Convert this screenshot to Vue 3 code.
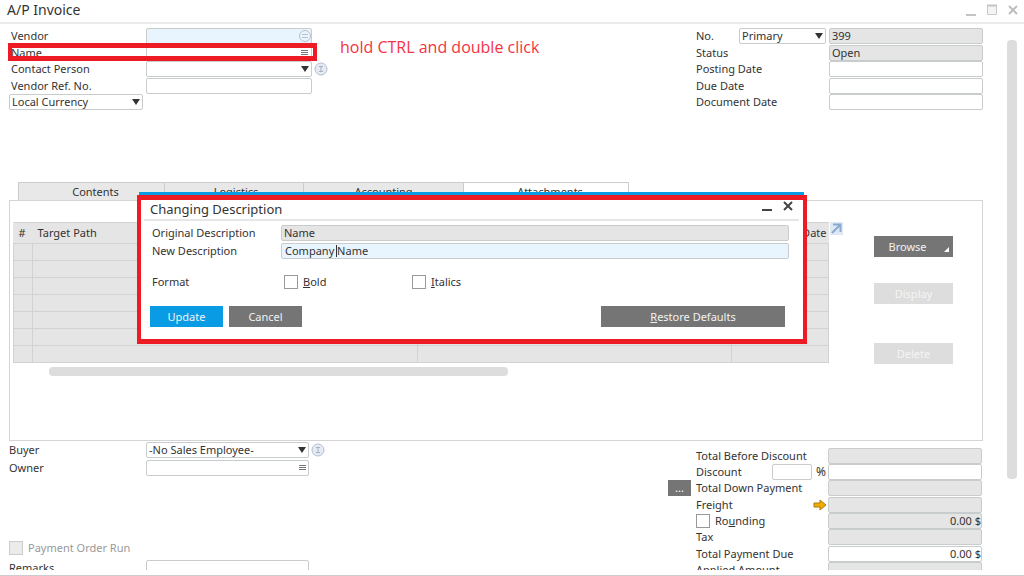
<template>
  <div class="window">
    <header class="titlebar">
      <h1>A/P Invoice</h1>
      <div class="win-buttons">
        <button aria-label="Minimize"><svg width="12" height="14"><path d="M1 12h10" stroke="#c4c4c4" stroke-width="2" /></svg></button>
        <button aria-label="Maximize"><svg width="12" height="14"><path d="M1.500 2.500h9v9h-9z" fill="#f4f4f4" stroke="#c8c8c8" /><path d="M1 2.500h10" stroke="#c4c4c4" stroke-width="2" /></svg></button>
        <button aria-label="Close"><svg width="12" height="14"><path d="M2 3l8 8M10 3l-8 8" stroke="#bdbdbd" stroke-width="2" /></svg></button>
      </div>
    </header>

    <div class="body">
      <main class="content">
        <section class="head">
          <div class="form left">
            <label for="vendor">Vendor</label>
            <div class="field">
              <input id="vendor" v-model="form.vendor" class="active" />
              <svg class="end" width="12" height="12"><circle cx="6" cy="6" r="5.500" fill="none" stroke="#b9bfc4" /><path d="M3 4.500h6M3 7.500h6" stroke="#b9bfc4" /></svg>
            </div>
            <label for="name">Name</label>
            <div class="field">
              <input id="name" v-model="form.name" />
              <svg class="end" width="12" height="12"><path d="M2 3.500h7M2 5.500h7M2 7.500h7" stroke="#777" /></svg>
            </div>
            <label for="contact">Contact Person</label>
            <div class="field">
              <select id="contact" v-model="form.contact"><option value=""></option></select>
              <svg class="end" width="12" height="12"><path d="M2 3h8L6 9z" fill="#333" /></svg>
              <svg class="info" width="14" height="14"><circle cx="7" cy="7" r="6" fill="#e6ebf3" stroke="#b3bfd0" /><path d="M5 4.500h4M5 9.500h4M7 5v4" stroke="#a6b0c2" /></svg>
            </div>
            <label for="ref">Vendor Ref. No.</label>
            <div class="field"><input id="ref" v-model="form.ref" /></div>
            <div class="field currency">
              <select v-model="form.currency" aria-label="Currency"><option>Local Currency</option></select>
              <svg class="end" width="12" height="12"><path d="M2 3h8L6 9z" fill="#333" /></svg>
            </div>
            <div class="mark"></div>
          </div>

          <p class="hint">hold CTRL and double click</p>

          <div class="form right">
            <div class="series">
              <label for="number">No.</label>
              <div class="field">
                <select v-model="form.series" aria-label="Series"><option>Primary</option></select>
                <svg class="end" width="12" height="12"><path d="M2 3h8L6 9z" fill="#333" /></svg>
              </div>
            </div>
            <div class="field"><input id="number" value="399" readonly /></div>
            <label for="status">Status</label>
            <div class="field"><input id="status" value="Open" readonly /></div>
            <template v-for="d in dates" :key="d.id">
              <label :for="d.id">{{ d.label }}</label>
              <div class="field"><input :id="d.id" v-model="form[d.id]" /></div>
            </template>
          </div>
        </section>

        <section class="details">
          <nav class="tabs">
            <button v-for="t in tabs" :key="t" :class="[t.toLowerCase(), { on: t === tab }]" @click="tab = t">{{ t }}</button>
          </nav>
          <div class="panel">
            <div class="table-area">
              <table>
                <colgroup><col class="c-num" /><col class="c-path" /><col class="c-file" /><col class="c-date" /></colgroup>
                <thead>
                  <tr><th>#</th><th>Target Path</th><th></th><th class="date">Date</th></tr>
                </thead>
                <tbody>
                  <tr v-for="r in 7" :key="r"><td v-for="c in 4" :key="c"></td></tr>
                </tbody>
              </table>
              <div class="hscroll"></div>
            </div>
            <button class="expand" aria-label="Expand table">
              <svg width="13" height="13"><path d="M0 0h13v13H0z" fill="#dfe9f5" /><path d="M3 2.500h7.500V10M10 3l-8 8" fill="none" stroke="#8aa9cf" stroke-width="2" /></svg>
            </button>
            <div class="actions">
              <button class="btn">Browse<svg class="corner" width="5" height="5"><path d="M5 0v5H0z" fill="#fff" /></svg></button>
              <button class="btn" disabled>Display</button>
              <button class="btn last" disabled>Delete</button>
            </div>
          </div>

          <div class="dialog" role="dialog" aria-labelledby="dlg-title">
            <div class="dlg-bar">
              <h2 id="dlg-title">Changing Description</h2>
              <div class="win-buttons">
                <button aria-label="Minimize dialog"><svg width="12" height="14"><path d="M1 10h10" stroke="#444" stroke-width="2" /></svg></button>
                <button aria-label="Close dialog"><svg width="12" height="14"><path d="M2 2l8 8M10 2l-8 8" stroke="#444" stroke-width="2" /></svg></button>
              </div>
            </div>
            <div class="dlg-form">
              <label for="orig">Original Description</label>
              <div class="field"><input id="orig" value="Name" readonly /></div>
              <label for="desc">New Description</label>
              <div class="field"><input id="desc" v-model="description" class="active desc" /><span class="caret"></span></div>
            </div>
            <div class="format">
              <span>Format</span>
              <label><input v-model="bold" type="checkbox" /><span><u>B</u>old</span></label>
              <label><input v-model="italics" type="checkbox" /><span><u>I</u>talics</span></label>
            </div>
            <div class="dlg-buttons">
              <button class="btn primary">Update</button>
              <button class="btn">Cancel</button>
              <button class="btn restore"><span><u>R</u>estore Defaults</span></button>
            </div>
          </div>
        </section>

        <section class="foot">
          <div class="people">
            <label for="buyer">Buyer</label>
            <div class="field">
              <select id="buyer" v-model="form.buyer"><option>-No Sales Employee-</option></select>
              <svg class="end" width="12" height="12"><path d="M2 3h8L6 9z" fill="#333" /></svg>
              <svg class="info" width="14" height="14"><circle cx="7" cy="7" r="6" fill="#e6ebf3" stroke="#b3bfd0" /><path d="M5 4.500h4M5 9.500h4M7 5v4" stroke="#a6b0c2" /></svg>
            </div>
            <label for="owner">Owner</label>
            <div class="field">
              <input id="owner" v-model="form.owner" />
              <svg class="end" width="12" height="12"><path d="M3 3.500h7M3 5.500h7M3 7.500h7" stroke="#777" /></svg>
            </div>
            <label class="order-run"><input type="checkbox" disabled />Payment Order Run</label>
            <label for="remarks">Remarks</label>
            <div class="field"><textarea id="remarks" v-model="form.remarks"></textarea></div>
          </div>

          <div class="totals">
            <template v-for="t in totals" :key="t.id">
              <div class="total-label">
                <button v-if="t.more" class="more" aria-label="Down payments">...</button>
                <label v-if="t.check"><input v-model="rounding" type="checkbox" /><span>Ro<u>u</u>nding</span></label>
                <label v-else :for="t.id">{{ t.label }}</label>
                <span v-if="t.percent" class="percent"><input v-model="form.percent" aria-label="Discount percent" />%</span>
                <svg v-if="t.link" class="link" width="14" height="12"><path d="M1 4h6V1l6 5-6 5V8H1z" fill="#f0ab00" stroke="#a97b14" /></svg>
              </div>
              <div class="field"><input :id="t.id" :value="t.value" :readonly="!t.editable" :class="{ plain: t.plain }" :aria-label="t.label" /></div>
            </template>
          </div>
        </section>
      </main>
      <div class="vscroll"></div>
    </div>
  </div>
</template>

<script setup>
import { reactive, ref } from 'vue'

const form = reactive({
  vendor: '',
  name: '',
  contact: '',
  ref: '',
  currency: 'Local Currency',
  series: 'Primary',
  posting: '',
  due: '',
  document: '',
  buyer: '-No Sales Employee-',
  owner: '',
  remarks: '',
  percent: '',
})

const dates = [
  { id: 'posting', label: 'Posting Date' },
  { id: 'due', label: 'Due Date' },
  { id: 'document', label: 'Document Date' },
]

const tabs = ['Contents', 'Logistics', 'Accounting', 'Attachments']
const tab = ref('Attachments')

const description = ref('Company Name')
const bold = ref(false)
const italics = ref(false)
const rounding = ref(false)

const totals = [
  { id: 'before', label: 'Total Before Discount', value: '' },
  { id: 'discount', label: 'Discount', value: '', percent: true, editable: true, plain: true },
  { id: 'down', label: 'Total Down Payment', value: '', more: true },
  { id: 'freight', label: 'Freight', value: '', link: true },
  { id: 'rounding', label: 'Rounding', value: '0.00 $', check: true },
  { id: 'tax', label: 'Tax', value: '' },
  { id: 'due-total', label: 'Total Payment Due', value: '0.00 $', plain: true },
  { id: 'applied', label: 'Applied Amount', value: '' },
]
</script>

<style>
body { margin: 0; background: #fff; }
</style>

<style scoped>
* { box-sizing: border-box; }
.window {
  height: 100vh; display: flex; flex-direction: column;
  padding-bottom: 5px; border-bottom: 1px solid #ccc;
  font: 11px/16px "Noto Sans", "Open Sans", sans-serif;
  color: #333; background: #fff;
}
button, input, select, textarea { font: inherit; color: inherit; margin: 0; }
button { border: 0; padding: 0; background: none; cursor: pointer; }
svg { display: block; }

.titlebar {
  flex: none; height: 24px; border-bottom: 2px solid #ebebeb;
  display: flex; align-items: center; justify-content: space-between;
  padding: 0 5px 2px 7px;
}
h1, h2 { margin: 0; font-weight: 400; }
h1 { font-size: 14px; line-height: 22px; }
h2 { font-size: 13px; line-height: 18px; }
.win-buttons { display: flex; gap: 9px; }

.body { flex: 1; min-height: 0; display: flex; overflow: hidden; }
.content { flex: 1; min-width: 0; padding: 4px 0 0 9px; }
.vscroll { flex: none; width: 10px; height: 439px; margin: 16px 7px 0 24px; border-radius: 4px; background: #ddd; }

.field { position: relative; height: 16px; }
.field input, .field select, .field textarea, .percent input {
  display: block; width: 100%; height: 16px; padding: 0 2px;
  border: 1px solid #c9cccc; border-radius: 2px; background: #fff;
  line-height: 14px; outline: none; appearance: none;
}
.field input { padding-bottom: 2px; }
.field input[readonly] { background: #e5e5e5; }
.field input.plain { background: #fff; }
.field input.active { background: #e8f5ff; }
.end { position: absolute; right: 1px; top: 2px; pointer-events: none; }
.info { position: absolute; left: calc(100% + 2px); top: 1px; }

.head { display: flex; height: 154px; }
.form { display: grid; grid-auto-rows: 17px 16px; align-content: start; }
.left { position: relative; grid-template-columns: 137px 166px; }
.left label { padding-left: 2px; }
.currency { width: 134px; }
.mark {
  position: absolute; left: -1px; top: 15px; width: 309px; height: 18px;
  border: solid #ed1c24; border-width: 5px 4px; pointer-events: none;
}
.hint { margin: 9px 0 0 28px; font-family: "Open Sans", sans-serif; font-size: 16px; line-height: 20px; color: #f5333f; white-space: nowrap; }
.right { grid-template-columns: 133px 154px; margin-left: auto; }
.series { display: flex; justify-content: space-between; padding-right: 3px; }
.series .field { width: 87px; }

.details { position: relative; }
.tabs { display: flex; padding-left: 9px; }
.tabs button {
  height: 18px; border: 1px solid #ccc; border-width: 1px 0 0 1px;
  background: #e8e8e8; line-height: 17px;
}
.tabs .contents { width: 146px; padding-left: 8px; }
.tabs .logistics { width: 139px; padding-left: 4px; }
.tabs .accounting { width: 160px; }
.tabs .attachments { width: 166px; padding-left: 8px; border-right-width: 1px; }
.tabs .on { background: #fff; }

.panel {
  display: flex; align-items: flex-start; height: 241px;
  border: 1px solid #d4d4d4; padding: 21px 29px 0 3px;
}
.table-area { flex: 1; }
table { width: 100%; table-layout: fixed; border-collapse: collapse; background: #e5e5e5; }
.c-num { width: 19px; }
.c-file { width: 314px; }
.c-date { width: 97px; }
th { height: 21px; padding: 0 5px; border: 1px solid #d2d2d2; border-width: 1px 0; font-weight: 400; text-align: left; line-height: 16px; }
th.date { padding-right: 2px; text-align: right; }
td { height: 17px; padding: 0; border: 1px solid #d2d2d2; }
.hscroll { width: 459px; height: 9px; margin: 4px 0 0 36px; border-radius: 4px; background: #ddd; }
.expand { margin-left: 1px; }
.actions { width: 79px; margin: 14px 0 0 31px; display: flex; flex-direction: column; }
.actions .btn + .btn { margin-top: 26px; }
.actions .btn.last { margin-top: 39px; }
.btn { position: relative; height: 21px; background: #757575; color: #f2f2f2; line-height: 20px; }
.btn:disabled { background: #ddd; color: #f5f5f5; cursor: default; }
.actions .btn:first-child { padding-right: 12px; }
.corner { position: absolute; right: 4px; bottom: 5px; }

.dialog {
  position: absolute; left: 128px; right: 176px; top: 13px; height: 149px;
  border: solid #ed1c24; border-width: 5px 4px; background: #fff;
}
.dialog::before { content: ""; position: absolute; left: -2px; right: -1px; top: -8px; height: 3px; background: #0a9be5; }
.dlg-bar {
  display: flex; justify-content: space-between; height: 21px; margin: 0 4px 0 3px;
  padding: 0 5px 0 6px; border-bottom: 2px solid #e6e6e6;
}
.dlg-bar .win-buttons { align-items: flex-start; }
.dlg-form {
  display: grid; grid-template-columns: 129px 1fr; grid-auto-rows: 18px;
  padding: 4px 14px 0 11px;
}
.field input.desc { padding-left: 3px; }
.caret { position: absolute; left: 55px; top: 2px; width: 1px; height: 12px; background: #333; }
.format { display: grid; grid-template-columns: 132px 128px 1fr; padding: 13px 14px 0 11px; }
.format label, .order-run, .total-label label { display: flex; align-items: center; }
input[type="checkbox"] {
  flex: none; appearance: none; width: 14px; height: 14px; margin: 0 5px 0 0;
  border: 1px solid #999; background: #fff;
}
input[type="checkbox"]:disabled { background: #ebebeb; border-color: #ccc; }
.dlg-buttons { display: flex; gap: 6px; padding: 16px 18px 0 9px; }
.dlg-buttons .btn { width: 73px; }
.dlg-buttons .primary { background: #0a9be5; }
.dlg-buttons .restore { width: 184px; margin-left: auto; }

.foot { display: flex; justify-content: space-between; }
.people { display: grid; grid-template-columns: 137px 163px; grid-template-rows: 18px 81px 19px 30px; padding-top: 1px; }
.order-run { grid-column: 1 / 3; height: 14px; color: #999; }
.field textarea { height: 30px; resize: none; }
.totals { display: grid; grid-template-columns: 160px 154px; grid-auto-rows: 16px 16px 17px; padding: 7px 1px 0 0; }
.total-label { display: flex; align-items: center; height: 16px; }
.total-label > .more { width: 23px; height: 16px; margin: 0 5px 0 0; background: #757575; color: #fff; line-height: 12px; }
.total-label > label:first-child { margin-left: 28px; }
.total-label > label { white-space: nowrap; }
.percent { display: flex; gap: 4px; margin: 0 2px 0 auto; font-size: 12px; }
.percent input { width: 40px; }
.link { margin-left: auto; margin-right: 1px; }
.totals .field input { padding-right: 0; text-align: right; }
</style>
